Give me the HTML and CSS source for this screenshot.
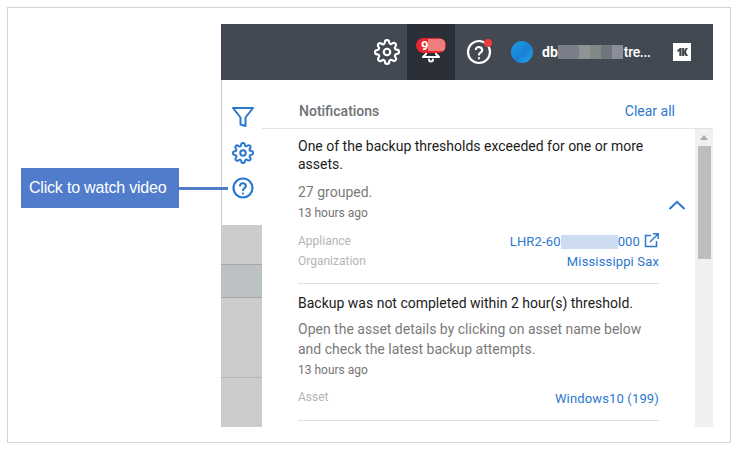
FILE: index.html
```html
<!DOCTYPE html>
<html lang="en">
<head>
<meta charset="utf-8">
<title>Notifications</title>
<link rel="stylesheet" href="styles.css">
</head>
<body>
<div class="frame">
  <div class="callout"><span class="callout-label">Click to watch video</span><span class="callout-line"></span></div>
  <div class="app">
    <header class="topbar">
      <span class="top-icon gear">
        <svg width="26" height="26" viewBox="0 0 24 24" fill="none" stroke="#fff" stroke-width="2" stroke-linecap="round" stroke-linejoin="round"><circle cx="12" cy="12" r="3"/><path d="M19.4 15a1.65 1.65 0 0 0 .33 1.82l.06.06a2 2 0 1 1-2.83 2.83l-.06-.06a1.65 1.65 0 0 0-2.82 1.17V21a2 2 0 0 1-4 0v-.09a1.65 1.65 0 0 0-2.82-1.14l-.06.06a2 2 0 1 1-2.83-2.83l.06-.06a1.65 1.65 0 0 0-1.17-2.82H3a2 2 0 0 1 0-4h.09a1.65 1.65 0 0 0 1.14-2.82l-.06-.06a2 2 0 1 1 2.83-2.83l.06.06a1.65 1.65 0 0 0 1.82.33H9a1.65 1.65 0 0 0 1-1.51V3a2 2 0 0 1 4 0v.09a1.65 1.65 0 0 0 2.82 1.14l.06-.06a2 2 0 1 1 2.83 2.83l-.06.06a1.65 1.65 0 0 0 1.17 2.82H21a2 2 0 0 1 0 4h-.09a1.65 1.65 0 0 0-1.51 1z"/></svg>
      </span>
      <span class="bell-tab">
        <svg class="bell" width="20" height="22" viewBox="0 0 20 22" fill="none" stroke="#fff" stroke-width="2" stroke-linecap="round" stroke-linejoin="round"><path d="M5 4v9l-3 3h16l-3-3V4"/><path d="M8 18.500a2 2 0 0 0 4 0"/></svg>
        <span class="badge">9<span class="badge-blur"></span></span>
      </span>
      <span class="top-icon help">
        <svg width="26" height="26" viewBox="0 0 26 26" fill="none" stroke="#fff" stroke-width="2.200" stroke-linecap="round" stroke-linejoin="round"><circle cx="13" cy="13" r="11"/><path d="M9.800 10.200a3.300 3.300 0 0 1 6.400 1c0 2.200-3.200 2.600-3.200 4.400"/><path d="M13 19.200v.1"/></svg>
        <span class="dot"></span>
      </span>
      <span class="avatar"></span>
      <span class="user">db<span class="blur"><i></i><i></i><i></i><i></i><i></i><i></i></span><span class="user-end">tre...</span></span>
      <span class="logo">
        <svg width="11" height="8" viewBox="0 0 14 10" fill="#3f454c"><path d="M0 3.500 3.500 0H5.800V10H3V3.600L1.500 5Z"/><path d="M6.500 0H9.300V4L11 0H13.800L11.300 4.800 14 10H11L9.300 6.500V10H6.500Z"/></svg>
      </span>
    </header>
    <div class="body">
      <aside class="rail">
        <div class="rail-tools">
          <svg width="24" height="24" viewBox="0 0 24 24" fill="none" stroke="#2a78d0" stroke-width="2" stroke-linejoin="round"><path d="M2 3h20l-7.500 9.500V21l-5-1.500V12.500Z"/></svg>
          <svg width="22" height="22" viewBox="0 0 24 24" fill="none" stroke="#2a78d0" stroke-width="2.200" stroke-linecap="round" stroke-linejoin="round"><circle cx="12" cy="12" r="3"/><path d="M19.4 15a1.65 1.65 0 0 0 .33 1.82l.06.06a2 2 0 1 1-2.83 2.83l-.06-.06a1.65 1.65 0 0 0-2.82 1.17V21a2 2 0 0 1-4 0v-.09a1.65 1.65 0 0 0-2.82-1.14l-.06.06a2 2 0 1 1-2.83-2.83l.06-.06a1.65 1.65 0 0 0-1.17-2.82H3a2 2 0 0 1 0-4h.09a1.65 1.65 0 0 0 1.14-2.82l-.06-.06a2 2 0 1 1 2.83-2.83l.06.06a1.65 1.65 0 0 0 1.82.33H9a1.65 1.65 0 0 0 1-1.51V3a2 2 0 0 1 4 0v.09a1.65 1.65 0 0 0 2.82 1.14l.06-.06a2 2 0 1 1 2.83 2.83l-.06.06a1.65 1.65 0 0 0 1.17 2.82H21a2 2 0 0 1 0 4h-.09a1.65 1.65 0 0 0-1.51 1z"/></svg>
          <svg width="22" height="22" viewBox="0 0 22 22" fill="none" stroke="#2a78d0" stroke-width="2.200" stroke-linecap="round" stroke-linejoin="round"><circle cx="11" cy="11" r="9.500"/><path d="M8 8.500a3 3 0 0 1 5.900.6c0 2-2.900 2.300-2.900 4"/><path d="M11 16.500v.1"/></svg>
        </div>
        <div class="rail-rows">
          <div class="row-a"></div>
          <div class="row-b"></div>
          <div class="row-c"></div>
          <div class="row-d"></div>
        </div>
      </aside>
      <section class="panel">
        <div class="panel-head">
          <span class="panel-title">Notifications</span>
          <a class="clear">Clear all</a>
        </div>
        <div class="panel-body">
          <div class="list">
            <article class="item first">
              <h3 class="title">One of the backup thresholds exceeded for one or more assets.</h3>
              <p class="desc grouped">27 grouped.</p>
              <p class="time">13 hours ago</p>
              <div class="meta">
                <span class="key">Appliance</span>
                <a class="val">LHR2-60<span class="mask"></span>000<svg class="ext" width="15" height="15" viewBox="0 0 15 15" fill="none" stroke="#2a78d0" stroke-width="1.500"><path d="M12.500 8v5.500H1.500V2.500H7"/><path d="M6 9 14 1M9 .8h5.200V6"/></svg></a>
              </div>
              <div class="meta second">
                <span class="key">Organization</span>
                <a class="val">Mississippi Sax</a>
              </div>
              <svg class="chevron" width="18" height="10" viewBox="0 0 18 10" fill="none" stroke="#2a78d0" stroke-width="2"><path d="M1.500 9 9 1.800 16.500 9"/></svg>
            </article>
            <article class="item">
              <h3 class="title">Backup was not completed within 2 hour(s) threshold.</h3>
              <p class="desc">Open the asset details by clicking on asset name below and check the latest backup attempts.</p>
              <p class="time">13 hours ago</p>
              <div class="meta asset">
                <span class="key">Asset</span>
                <a class="val">Windows10 (199)</a>
              </div>
            </article>
          </div>
          <div class="scrollbar">
            <span class="arrow"></span>
            <span class="thumb"></span>
          </div>
        </div>
      </section>
    </div>
  </div>
</div>
</body>
</html>
```
FILE: styles.css
```css
* { box-sizing: border-box; }
html, body { margin: 0; padding: 0; background: #fff; }
body { width: 754px; height: 463px; overflow: hidden; font-family: Roboto, "Liberation Sans", sans-serif; }

.frame {
  position: relative;
  margin: 7px 0 0 7px;
  width: 724px;
  height: 436px;
  border: 1px solid #d4d4d4;
  padding: 16px 0 0 213px;
}

.callout { position: absolute; left: 13px; top: 160px; display: flex; align-items: center; z-index: 2; }
.callout-label {
  width: 158px; height: 40px; background: #507ccb; color: #fff;
  font: 16px/40px "Liberation Sans", Arial, sans-serif; letter-spacing: -0.2px; padding-left: 8px;
}
.callout-line { width: 49px; height: 3px; background: #507ccb; }

.app { width: 492px; height: 403px; display: flex; flex-direction: column; }

.topbar { height: 56px; background: #434952; display: flex; align-items: center; flex: none; }
.top-icon { position: relative; display: flex; }
.gear { margin-left: 153px; }
.bell-tab { position: relative; width: 48px; height: 56px; margin-left: 7px; background: #2b3038; display: flex; justify-content: center; }
.bell { margin-top: 17px; }
.badge {
  position: absolute; left: 9px; top: 14px; width: 30px; height: 15px; border-radius: 8px;
  background: #e8282e; color: #fff; font-size: 13px; line-height: 15px; font-weight: 700; padding-left: 5px; overflow: hidden;
}
.badge-blur { position: absolute; left: 12px; top: 1px; width: 17px; height: 12px; background: #ee7d7d; }
.help { margin-left: 11px; }
.dot { position: absolute; right: 0; top: 0; width: 8px; height: 8px; border-radius: 50%; background: #ef3b3b; }
.avatar { width: 22px; height: 22px; border-radius: 50%; margin-left: 19px; background: linear-gradient(135deg, #1fa0e4 0%, #1780d8 55%, #2aa6ea 100%); }
.user { display: flex; align-items: center; margin-left: 9px; color: #fff; font-size: 14px; font-weight: 700; width: 110px; }
.blur { display: flex; width: 65px; height: 14px; }
.blur i { flex: 1; height: 14px; background: #7c7f89; }
.blur i:nth-child(3) { background: #8e9394; }
.blur i:nth-child(4) { background: #7f8a86; }
.blur i:nth-child(5) { background: #6f747e; }
.blur i:nth-child(6) { background: #8b8e96; }
.user-end { margin-left: 1px; letter-spacing: -0.3px; font-weight: 500; }
.logo { width: 18px; height: 18px; background: #fff; margin-left: 21px; display: flex; align-items: center; justify-content: center; }

.body { flex: 1; display: flex; min-height: 0; }

.rail { width: 41px; display: flex; flex-direction: column; flex: none; }
.rail-tools { height: 145px; border-left: 1px solid #c9c9c9; display: flex; flex-direction: column; align-items: center; gap: 13px; padding: 25px 0 0 1px; }
.rail-rows { flex: 1; background: #cccccc; display: flex; flex-direction: column; }
.row-a { height: 39px; }
.row-b { height: 34px; background: #bcc1c4; border-top: 1px solid #a6a6a6; border-bottom: 1px solid #a6a6a6; }
.row-c { height: 79px; }
.row-d { flex: 1; border-top: 1px solid #b4b4b4; }

.panel { flex: 1; display: flex; flex-direction: column; min-width: 0; }
.panel-head { height: 49px; flex: none; border-bottom: 1px solid #e3e3e3; display: flex; justify-content: space-between; align-items: center; padding: 14px 38px 0 37px; }
.panel-title { font-size: 14px; font-weight: 500; color: #6d7276; }
.clear { font-size: 14px; color: #2a78d0; }

.panel-body { flex: 1; display: flex; min-height: 0; overflow: hidden; }
.list { flex: 1; padding: 0 36px; min-width: 0; }
.item { position: relative; border-bottom: 1px solid #e0e0e0; padding-top: 9px; }
.item.first { height: 155px; }
.item + .item { height: 137px; padding-top: 11px; }
.title { margin: 0; font-size: 14px; line-height: 17.5px; font-weight: 450; color: #1c1c1c; }
.desc { margin: 6px 0 0; font-size: 14px; line-height: 20px; color: #7a7a7a; }
.grouped { margin-top: 9px; }
.time { margin: 1px 0 0; font-size: 12px; line-height: 20px; color: #757575; }
.meta { display: flex; justify-content: space-between; align-items: center; height: 20px; margin-top: 8px; }
.meta.second { margin-top: 0; }
.meta.asset { margin-top: 8px; }
.key { font-size: 12px; color: #b5b5b5; margin-top: -1px; }
.val { font-size: 13px; color: #2a78d0; letter-spacing: 0.15px; display: flex; align-items: center; margin-top: 1px; }
.mask { width: 57px; height: 14px; background: #cddcf0; }
.ext { margin-left: 4px; margin-top: -3px; }
.chevron { position: absolute; right: -27px; top: 71px; }

.scrollbar { width: 18px; flex: none; background: #f0f0f0; display: flex; flex-direction: column; align-items: center; padding-top: 6px; }
.arrow { width: 0; height: 0; border-left: 4px solid transparent; border-right: 4px solid transparent; border-bottom: 5px solid #a9a9a9; }
.thumb { width: 13px; height: 113px; background: #bdbdbd; margin-top: 6px; }
```
